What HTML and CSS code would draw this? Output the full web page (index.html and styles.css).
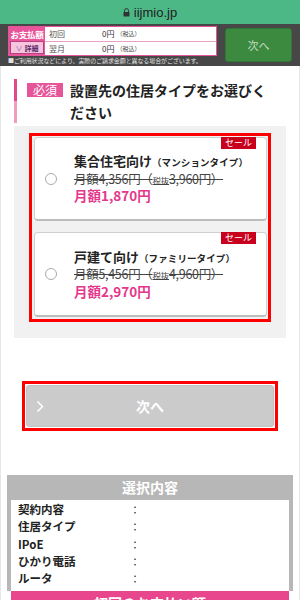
FILE: index.html
```html
<!DOCTYPE html>
<html lang="ja">
<head>
<meta charset="utf-8">
<link rel="stylesheet" href="styles.css">
</head>
<body>
<div class="addr">
  <svg class="lock" width="7" height="9" viewBox="0 0 7 9"><path d="M1.5 4V2.6a2 2 0 0 1 4 0V4" fill="none" stroke="#333" stroke-width="1"/><rect x="0.5" y="4" width="6" height="4.5" rx="0.6" fill="#333"/></svg>
  <span>iijmio.jp</span>
</div>
<div class="paybar">
  <div class="paybox">
    <div class="paylabel">
      <div class="paytitle">お支払額</div>
      <div class="detail"><span class="chev">∨</span>詳細</div>
    </div>
    <div class="payrows">
      <div class="payrow"><span class="pk">初回</span><span class="pv">0円</span><span class="tax">（税込）</span></div>
      <div class="payrow"><span class="pk">翌月</span><span class="pv">0円</span><span class="tax">（税込）</span></div>
    </div>
  </div>
  <button class="gnext">次へ</button>
  <p class="note">■ご利用状況などにより、実際のご請求金額と異なる場合がございます。</p>
</div>
<main class="page">
  <h2 class="qhead"><span class="must">必須</span><span class="qtext">設置先の住居タイプをお選びく<br>ださい</span></h2>
  <section class="panel">
    <div class="redbox">
      <label class="card">
        <span class="sale">セール</span>
        <span class="radio"></span>
        <span class="cbody">
          <span class="ctitle">集合住宅向け<small>（マンションタイプ）</small></span>
          <span class="cold">月額4,356円（<small>税抜</small>3,960円）</span>
          <span class="cnew">月額1,870円</span>
        </span>
      </label>
      <label class="card card2">
        <span class="sale">セール</span>
        <span class="radio"></span>
        <span class="cbody">
          <span class="ctitle">戸建て向け<small>（ファミリータイプ）</small></span>
          <span class="cold">月額5,456円（<small>税抜</small>4,960円）</span>
          <span class="cnew">月額2,970円</span>
        </span>
      </label>
    </div>
  </section>
  <div class="nextwrap">
    <button class="next">
      <svg class="chevr" width="8" height="13" viewBox="0 0 8 13"><path d="M1.5 1.5l5 5-5 5" fill="none" stroke="#fff" stroke-width="1.5"/></svg>
      <span>次へ</span>
    </button>
  </div>
  <section class="summary">
    <div class="shead">選択内容</div>
    <div class="sbody">
      <div class="srow"><span class="sk">契約内容</span><span class="sv">：</span></div>
      <div class="srow"><span class="sk">住居タイプ</span><span class="sv">：</span></div>
      <div class="srow"><span class="sk">IPoE</span><span class="sv">：</span></div>
      <div class="srow"><span class="sk">ひかり電話</span><span class="sv">：</span></div>
      <div class="srow"><span class="sk">ルータ</span><span class="sv">：</span></div>
    </div>
    <div class="sfoot">初回のお支払い額</div>
  </section>
</main>
</body>
</html>
```
FILE: styles.css
```css
* { box-sizing: border-box; }
html, body { margin: 0; padding: 0; }
body {
  font-family: "Noto Sans CJK JP", "Noto Sans", sans-serif;
  background: #fff;
  color: #222;
  width: 300px;
  overflow: hidden;
}
.addr {
  height: 24px;
  background: #4cb886;
  display: flex;
  align-items: center;
  justify-content: center;
  gap: 4px;
  font-family: "Liberation Sans", sans-serif;
  font-size: 13px;
  color: #222;
}
.paybar {
  height: 42px;
  background: #474747;
  display: grid;
  grid-template-columns: 209px 67px;
  grid-template-rows: 30px auto;
  column-gap: 8px;
  padding: 2px 8px 0 8px;
}
.paybox {
  display: flex;
  border: 1px solid #e2559a;
  background: #fff;
  height: 30px;
}
.paylabel {
  width: 36px;
  background: #e8559a;
  display: flex;
  flex-direction: column;
}
.paytitle {
  height: 14px;
  color: #fff;
  font-size: 8.5px;
  font-weight: 700;
  line-height: 14px;
  text-align: center;
  letter-spacing: -0.3px;
}
.detail {
  margin: 0 1px 1px;
  flex: 1;
  background: #f6c4dc;
  border: 1px solid #b9407c;
  font-size: 7px;
  font-weight: 700;
  color: #5b2a6e;
  display: flex;
  align-items: center;
  justify-content: center;
  gap: 2px;
}
.chev { color: #7a5ab0; font-weight: 400; }
.payrows { flex: 1; display: flex; flex-direction: column; }
.payrow {
  flex: 1;
  display: flex;
  align-items: center;
  padding-left: 4px;
  font-size: 8px;
  color: #444;
}
.payrow + .payrow { border-top: 1px solid #e8a3c4; }
.pk { width: 53px; color: #555; }
.pv { color: #333; }
.tax { font-size: 6px; margin-left: 2px; color: #444; }
.gnext {
  grid-row: 1 / 3;
  grid-column: 2;
  margin-top: 2px;
  height: 34px;
  background: #3b8a3f;
  border: 1px solid #2f7734;
  border-radius: 3px;
  color: #c6dcc6;
  font-family: inherit;
  font-size: 11px;
  padding: 0;
}
.note {
  margin: 0;
  grid-column: 1;
  grid-row: 2;
  font-size: 6px;
  line-height: 9px;
  color: #e0e0e0;
  white-space: nowrap;
  letter-spacing: -0.1px;
}
.page {
  border-left: 1px solid #e6e6e6;
  border-right: 1px solid #e6e6e6;
  height: 534px;
  padding-top: 13px;
}
.qhead {
  margin: 0 13px 0 13px;
  display: flex;
  align-items: flex-start;
  border-left: 3px solid #e8548f;
  border-image: linear-gradient(#e4488a 50%, #f39abf 50%) 1;
  padding-left: 10px;
  font-size: 14px;
  font-weight: 700;
  line-height: 22px;
  color: #222;
}
.must {
  flex: none;
  background: #e6559a;
  color: #fff;
  font-size: 12px;
  font-weight: 400;
  line-height: 14px;
  width: 36px;
  text-align: center;
  margin-top: 4px;
  margin-right: 7px;
}
.qtext { display: block; }
.panel {
  margin: 3px 13px 0 13px;
  background: #f1f1f1;
  padding: 7px 15px 16px 15px;
}
.redbox {
  border: 3px solid #ff0000;
  padding: 1px 1px 2px 2px;
}
.card {
  position: relative;
  display: flex;
  align-items: center;
  background: #fff;
  border: 1px solid #cfcfcf;
  border-bottom: 2px solid #bdbdbd;
  border-radius: 4px;
  padding: 14px 4px 14px 10px;
  height: 84px;
}
.card2 { margin-top: 11px; height: 85px; }
.sale {
  position: absolute;
  top: -1px;
  right: 10px;
  width: 35px;
  height: 12px;
  background: #c8001e;
  color: #fff;
  font-size: 9px;
  line-height: 12px;
  text-align: center;
}
.radio {
  flex: none;
  width: 12px;
  height: 12px;
  border: 1px solid #aaa;
  border-radius: 50%;
  margin-right: 17px;
  background: #fff;
}
.cbody { display: flex; flex-direction: column; }
.ctitle, .cold, .cnew {
  display: block;
  height: 17.5px;
  line-height: 17.5px;
  white-space: nowrap;
}
.ctitle {
  font-size: 13px;
  font-weight: 700;
  color: #222;
}
.ctitle small { font-size: 9.5px; line-height: 1; letter-spacing: 0.1px; }
.cold {
  font-size: 12.5px;
  color: #444;
  text-decoration: line-through;
  text-decoration-thickness: 1px;
  letter-spacing: -0.3px;
}
.cold small { font-size: 8.5px; line-height: 1; }
.cnew {
  font-size: 13.5px;
  font-weight: 700;
  color: #e5378b;
}
.nextwrap {
  margin: 43px 21px 0 21px;
  border: 3px solid #ff0000;
  padding: 1px;
}
.next {
  width: 100%;
  height: 42px;
  background: #cbcbcb;
  border: 1px solid #c2c2c2;
  border-radius: 3px;
  display: flex;
  align-items: center;
  position: relative;
  padding: 0;
  font-family: inherit;
  color: #fff;
  font-size: 14px;
  font-weight: 700;
}
.chevr { margin-left: 9px; }
.next span { flex: 1; text-align: center; margin-right: 17px; }
.summary {
  margin: 44px 6px 0 6px;
}
.shead {
  height: 25px;
  background: #b7b7b7;
  color: #fff;
  font-size: 14px;
  font-weight: 700;
  line-height: 25px;
  text-align: center;
}
.sbody {
  background: #fff;
  border-left: 4px solid #b7b7b7;
  border-right: 4px solid #b7b7b7;
  padding: 1px 7px 4px 7px;
}
.srow {
  display: flex;
  font-size: 11.5px;
  font-weight: 700;
  height: 17.3px;
  line-height: 17.3px;
  color: #222;
}
.sk { width: 112px; }
.sv { font-weight: 400; font-size: 10px; }
.sfoot {
  margin: 0 4px;
  background: #e8478e;
  color: #fff;
  font-size: 14px;
  font-weight: 700;
  line-height: 25px;
  text-align: center;
}
```
